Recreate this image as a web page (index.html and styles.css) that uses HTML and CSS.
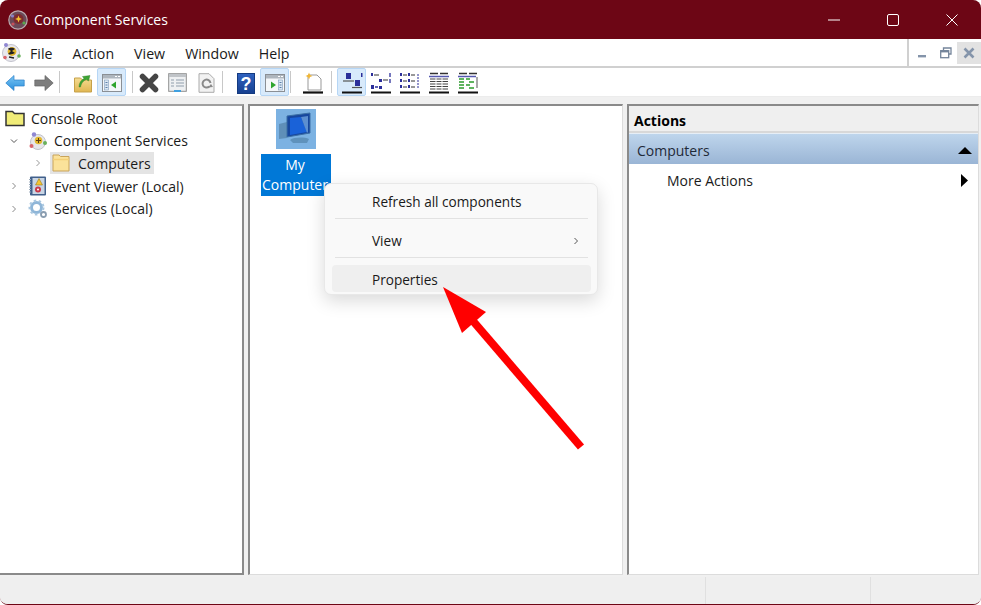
FILE: index.html
```html
<!DOCTYPE html>
<html lang="en">
<head>
<meta charset="utf-8">
<title>Component Services</title>
<link rel="stylesheet" href="styles.css">
</head>
<body>
<div class="window">
  <header class="titlebar">
    <div class="title-left">
      <svg class="app-icon" viewBox="0 0 20 20"><circle cx="10" cy="10" r="9.200" fill="#6b4a58" stroke="#b9a9ae" stroke-width="1.200"/><circle cx="10.500" cy="9" r="5" fill="#7d2a2e"/><path d="M10.500 5.600l1 2.400 2.400 1-2.400 1-1 2.400-1-2.400-2.400-1 2.400-1z" fill="#f3c431"/><circle cx="4.500" cy="6" r="1.600" fill="#8a7fc8"/><circle cx="5" cy="14" r="1.600" fill="#c8505a"/><circle cx="16" cy="13" r="1.600" fill="#5aa84c"/></svg>
      <span class="title-text">Component Services</span>
    </div>
    <div class="caption">
      <span class="cap-btn"><svg viewBox="0 0 12 12" width="12" height="12"><path d="M0 6h12" stroke="#fff" stroke-width="1"/></svg></span>
      <span class="cap-btn"><svg viewBox="0 0 12 12" width="12" height="12"><rect x=".5" y=".5" width="11" height="11" rx="1.500" fill="none" stroke="#fff"/></svg></span>
      <span class="cap-btn"><svg viewBox="0 0 12 12" width="12" height="12"><path d="M.5.5l11 11M11.500.5l-11 11" stroke="#fff" stroke-width="1"/></svg></span>
    </div>
  </header>

  <div class="menubar">
    <nav class="menus">
      <svg class="mmc-icon" viewBox="0 0 20 20"><circle cx="10" cy="11" r="8.500" fill="#e8e8ee" stroke="#c2c2cc"/><circle cx="11" cy="9.500" r="4.400" fill="#e2b52c"/><path d="M7 7c2-2 6-1 7 0l-3 2 3 2c-2 1-5 2-7 1l3-3z" fill="#222"/><path d="M8 15l5 1" stroke="#222" stroke-width="1.500"/><circle cx="5" cy="3" r="2" fill="#8f87d2"/><circle cx="4" cy="15.500" r="1.800" fill="#d8646c"/><circle cx="18" cy="14" r="1.800" fill="#69b05c"/></svg>
      <span class="menu-item">File</span>
      <span class="menu-item">Action</span>
      <span class="menu-item">View</span>
      <span class="menu-item">Window</span>
      <span class="menu-item">Help</span>
    </nav>
    <div class="mdi">
      <span class="mdi-btn"><svg viewBox="0 0 12 12" width="12" height="12"><rect x="1" y="8" width="8" height="2.400" fill="#8494aa"/></svg></span>
      <span class="mdi-btn"><svg viewBox="0 0 12 12" width="12" height="12"><path d="M3.500 3V1h7.500v6H9" fill="none" stroke="#75859b" stroke-width="1.300"/><rect x=".7" y="3.700" width="8" height="7" fill="#fff" stroke="#75859b" stroke-width="1.300"/><rect x=".7" y="3.400" width="8" height="2" fill="#75859b"/></svg></span>
      <span class="mdi-btn mdi-close"><svg viewBox="0 0 12 12" width="12" height="12"><path d="M1.500 1.500l9 9M10.500 1.500l-9 9" stroke="#8494aa" stroke-width="2.600"/></svg></span>
    </div>
  </div>

  <div class="toolbar">
    <span class="tb"><svg viewBox="0 0 20 18" width="20" height="18"><defs><linearGradient id="blueArrow" x1="0" y1="0" x2="0" y2="1"><stop offset="0" stop-color="#7cc6f4"/><stop offset="1" stop-color="#2a8fdc"/></linearGradient><linearGradient id="helpBlue" x1="0" y1="0" x2="0" y2="1"><stop offset="0" stop-color="#2f62c0"/><stop offset="1" stop-color="#17408f"/></linearGradient><linearGradient id="folderUp" x1="0" y1="0" x2="0" y2="1"><stop offset="0" stop-color="#f5dc92"/><stop offset="1" stop-color="#e0b651"/></linearGradient></defs><path d="M.8 9l8.200-7.500V6h10.200v6H9v4.500z" fill="url(#blueArrow)" stroke="#2a7fc8" stroke-width=".7"/></svg></span>
    <span class="tb"><svg viewBox="0 0 20 18" width="20" height="18"><path d="M19.200 9L11 1.500V6H.8v6H11v4.500z" fill="#7d7d7d" stroke="#666" stroke-width=".7"/></svg></span>
    <span class="sep sep-a"></span>
    <span class="tb"><svg viewBox="0 0 20 20" width="20" height="20"><path d="M1.500 5h6l2 2h9v12h-17z" fill="url(#folderUp)" stroke="#c6a14a"/><path d="M6 14c0-4 2-7 5-8.500L9.500 3.500 17 2.500l-1.500 5.500-2-1.500c-3 1-5 3-6 7.500z" fill="#3fa535" stroke="#2a7a22" stroke-width=".4"/></svg></span>
    <span class="tb active"><svg viewBox="0 0 20 18" width="20" height="18"><rect x=".5" y=".5" width="19" height="17" fill="#f4f7fa" stroke="#8a8f95"/><rect x="1" y="1" width="18" height="3.500" fill="#aeb6be"/><path d="M13 2.500h2M16 2.500h2" stroke="#fff"/><rect x="2.500" y="6" width="4" height="10" fill="#dbe8f4" stroke="#7d9cbd" stroke-width=".6"/><path d="M3.500 8.500h2M3.500 11h2M3.500 13.500h2" stroke="#5c7fa8"/><path d="M14 7.500v7l-5-3.500z" fill="#2ea52e"/></svg></span>
    <span class="sep sep-b"></span>
    <span class="tb"><svg viewBox="0 0 20 20" width="20" height="20"><path d="M3.500 3.500l13 13M16.500 3.500l-13 13" stroke="#454545" stroke-width="5.500" stroke-linecap="round"/></svg></span>
    <span class="tb"><svg viewBox="0 0 19 20" width="19" height="20"><rect x=".7" y=".7" width="17.600" height="17.600" fill="#eef0f2" stroke="#8f8f8f"/><rect x="1" y="1" width="17" height="3" fill="#c0c4c8"/><path d="M3 7h3M8 7h8M3 10h3M8 10h8M3 13h3M8 13h8" stroke="#8f9dab" stroke-width="1.200"/><rect x="6" y="17" width="7" height="2" fill="#3fa0e0"/></svg></span>
    <span class="tb"><svg viewBox="0 0 17 20" width="17" height="20"><path d="M1 .7h10l5 5v13.600H1z" fill="#f2f2f2" stroke="#aaa"/><path d="M12.500 10a4 4 0 1 0-1.200 3.500" fill="none" stroke="#8a8a8a" stroke-width="2"/><path d="M10 14.500l5-.5-2-3z" fill="#8a8a8a"/></svg></span>
    <span class="sep sep-a"></span>
    <span class="tb"><svg viewBox="0 0 18 21" width="18" height="21"><rect x=".5" y=".5" width="17" height="20" fill="url(#helpBlue)" stroke="#143a80"/><text x="9" y="17" class="help-mark">?</text></svg></span>
    <span class="tb active"><svg viewBox="0 0 20 18" width="20" height="18"><rect x=".5" y=".5" width="19" height="17" fill="#f4f7fa" stroke="#8a8f95"/><rect x="1" y="1" width="18" height="3.500" fill="#aeb6be"/><path d="M13 2.500h2M16 2.500h2" stroke="#fff"/><rect x="13.500" y="6" width="4" height="10" fill="#dbe8f4" stroke="#7d9cbd" stroke-width=".6"/><path d="M14.500 8.500h2M14.500 11h2M14.500 13.500h2" stroke="#5c7fa8"/><path d="M6 7.500v7l5-3.500z" fill="#2ea52e"/></svg></span>
    <span class="sep sep-c"></span>
    <span class="tb"><svg viewBox="0 0 20 22" width="20" height="22"><path d="M5 3h9l4 4v11H5z" fill="#fff" stroke="#999"/><path d="M0 20.500h20" stroke="#111" stroke-width="2.200"/><path d="M6 .5l1 2.500 2.500 1L7 5l-1 2.500L5 5 2.500 4 5 3z" fill="#f2b632"/></svg></span>
    <span class="sep sep-d"></span>
    <span class="tb active"><svg viewBox="0 0 22 22" width="22" height="22"><rect x="5" y="1" width="5" height="6" fill="#2b2f9a"/><path d="M2 9h11" stroke="#555" stroke-width="1.200"/><rect x="14" y="8" width="5" height="6" fill="#2b2f9a"/><path d="M11 15.500h10" stroke="#555" stroke-width="1.200"/><rect x="20" y="1" width="1.500" height="4" fill="#2b2f9a"/><path d="M1 20.500h20" stroke="#111" stroke-width="2"/></svg></span>
    <span class="tb"><svg viewBox="0 0 22 22" width="22" height="22"><path d="M1 1h2v3H1zM9 14h3v3H9zM9 7h3v3H9z" fill="#2b2f9a"/><path d="M4 3h5M13 8h5M2 15h2" stroke="#333"/><rect x="1" y="13" width="3" height="4" fill="#2b2f9a"/><path d="M20 1v4M20 7v4M5 15h3" stroke="#2b2f9a" stroke-width="1.300"/><path d="M1 20.500h20" stroke="#111" stroke-width="2"/></svg></span>
    <span class="tb"><svg viewBox="0 0 22 22" width="22" height="22"><g fill="#2b2f9a"><rect x="1" y="1" width="2" height="3"/><rect x="9" y="1" width="2" height="3"/><rect x="1" y="7" width="2" height="3"/><rect x="9" y="7" width="2" height="3"/><rect x="1" y="13" width="2" height="3"/><rect x="9" y="13" width="2" height="3"/></g><path d="M4 3h4M12 3h4M4 9h4M12 9h4M4 15h4M12 15h4" stroke="#333"/><path d="M19 2v14" stroke="#2b2f9a" stroke-dasharray="2 1"/><path d="M1 20.500h20" stroke="#111" stroke-width="2"/></svg></span>
    <span class="tb"><svg viewBox="0 0 22 22" width="22" height="22"><path d="M2 1.500h8M12 1.500h8" stroke="#333" stroke-width="1.500"/><path d="M1 4.500h20" stroke="#5558b0" stroke-width="1.500"/><path d="M2 7h18M2 9.500h18M2 12h18M2 14.500h18M2 17h18" stroke="#444" stroke-width="1.200"/><path d="M8 6v12M14 6v12" stroke="#fff"/><path d="M1 20.500h20" stroke="#111" stroke-width="2"/></svg></span>
    <span class="tb"><svg viewBox="0 0 22 22" width="22" height="22"><path d="M2 1.500h8M12 1.500h8" stroke="#333" stroke-width="1.500"/><path d="M1 4.500h18" stroke="#5558b0" stroke-width="1.500"/><path d="M2 7h5M9 7h4M2 10h5M12 10h5M2 13h5M9 13h4M2 16h5M12 16h5" stroke="#2c9c2c" stroke-width="1.500"/><rect x="19" y="5" width="2" height="11" fill="#aaa"/><path d="M1 20.500h20" stroke="#111" stroke-width="2"/></svg></span>
  </div>

  <main class="panes">
    <aside class="pane tree">
      <div class="row root">
        <svg class="tree-icon" viewBox="0 0 20 18"><path d="M1 2.500h6.500l2 2H19v12H1z" fill="#f0ec78" stroke="#333" stroke-width="1.500"/></svg>
        <span>Console Root</span>
      </div>
      <div class="row depth1">
        <svg class="chev" viewBox="0 0 12 12"><path d="M3 4.500l3 3 3-3" fill="none" stroke="#555" stroke-width="1"/></svg>
        <svg class="tree-icon" viewBox="0 0 20 20"><circle cx="10" cy="11" r="7.500" fill="#e6e6ea" stroke="#c0c0c8"/><circle cx="10.500" cy="9.500" r="3.800" fill="#e3b82e"/><path d="M10.500 7v5M8 9.500h5" stroke="#5a3d10"/><circle cx="6" cy="3.500" r="2.200" fill="#8f87d2"/><circle cx="3.500" cy="15" r="2" fill="#d8646c"/><circle cx="17" cy="12" r="2" fill="#69b05c"/></svg>
        <span>Component Services</span>
      </div>
      <div class="row depth2">
        <svg class="chev" viewBox="0 0 12 12"><path d="M4.500 3l3 3-3 3" fill="none" stroke="#9a9a9a" stroke-width="1"/></svg>
        <span class="selected">
          <svg class="tree-icon" viewBox="0 0 20 18"><path d="M2 1h6l1.500 1.500H18V17H2z" fill="#fbe29a" stroke="#c9a45a"/><path d="M2 5.500h16" stroke="#f3cf76" stroke-width="1.500"/></svg>
          <span>Computers</span>
        </span>
      </div>
      <div class="row depth1">
        <svg class="chev" viewBox="0 0 12 12"><path d="M4.500 3l3 3-3 3" fill="none" stroke="#8a8a8a" stroke-width="1"/></svg>
        <svg class="tree-icon" viewBox="0 0 20 20"><rect x="2" y=".5" width="16" height="19" rx="1" fill="#41608c"/><rect x="4.500" y="2" width="12" height="16" fill="#c9d5e4"/><path d="M2 3v14" stroke="#9ab" stroke-dasharray="1 1.500" stroke-width="2"/><path d="M11 2.500l3.500 6.500h-7z" fill="#f4c430" stroke="#8a6d10" stroke-width=".5"/><circle cx="10" cy="13.500" r="3" fill="#c8394a"/><circle cx="10" cy="13.500" r="1" fill="#fff"/></svg>
        <span>Event Viewer (Local)</span>
      </div>
      <div class="row depth1">
        <svg class="chev" viewBox="0 0 12 12"><path d="M4.500 3l3 3-3 3" fill="none" stroke="#8a8a8a" stroke-width="1"/></svg>
        <svg class="tree-icon" viewBox="0 0 20 20"><circle cx="8.500" cy="8.500" r="5" fill="none" stroke="#8fb6d8" stroke-width="3"/><circle cx="8.500" cy="8.500" r="7" fill="none" stroke="#a9c7e0" stroke-width="2" stroke-dasharray="2.500 2.500"/><circle cx="15.500" cy="15.500" r="2.500" fill="none" stroke="#8a9db0" stroke-width="1.800"/></svg>
        <span>Services (Local)</span>
      </div>
    </aside>

    <section class="pane center">
      <div class="computer">
        <div class="computer-icon">
          <svg viewBox="0 0 40 40" width="40" height="40"><path d="M3 15l8-2v16l-8 1z" fill="#5f8fb8"/><path d="M11 7l23-3v20l-23 4z" fill="#17479e" stroke="#3a6ea5"/><path d="M14 9l11-1 6 15-17 3z" fill="#1a62d8"/><path d="M25 8l7-1v16l-1 1z" fill="#5c8fd0"/><path d="M14 31c4-3 14-3 19-1l-2 4H17z" fill="#5f92bc"/></svg>
        </div>
        <div class="computer-label">My Computer</div>
      </div>
    </section>

    <aside class="pane actions">
      <h2 class="actions-title">Actions</h2>
      <div class="actions-group">
        <span>Computers</span>
        <svg viewBox="0 0 14 7" width="14" height="7"><path d="M7 0l7 7H0z" fill="#000"/></svg>
      </div>
      <div class="actions-item">
        <span>More Actions</span>
        <svg viewBox="0 0 7 13" width="7" height="13"><path d="M0 0l7 6.500L0 13z" fill="#000"/></svg>
      </div>
    </aside>
  </main>

  <footer class="statusbar">
    <span class="status-cell wide"></span>
    <span class="status-cell mid"></span>
    <span class="status-cell end"></span>
  </footer>

  <div class="context-menu">
    <div class="ctx-item">Refresh all components</div>
    <div class="ctx-sep"></div>
    <div class="ctx-item">View<svg class="ctx-chev" viewBox="0 0 6 8" width="6" height="8"><path d="M1.500 1l3 3-3 3" fill="none" stroke="#555" stroke-width="1"/></svg></div>
    <div class="ctx-sep ctx-sep-last"></div>
    <div class="ctx-item hover">Properties</div>
  </div>

  <svg class="arrow" viewBox="0 0 981 605" width="981" height="605"><path d="M581 447L473 321" stroke="#ff0000" stroke-width="8" fill="none"/><path d="M443 287l43 25-24 21z" fill="#ff0000"/></svg>
</div>
</body>
</html>
```

FILE: styles.css
```css
* { box-sizing: border-box; }
html, body { margin: 0; padding: 0; background: #fff; }
body { width: 981px; height: 605px; overflow: hidden; font-family: "Open Sans", "Noto Sans", sans-serif; font-size: 14px; color: #1a1a1a; }
svg { display: block; flex: none; }

.window { position: relative; width: 981px; height: 605px; display: flex; flex-direction: column; overflow: hidden; border-radius: 8px; background: #f0f0f0; border-bottom: 1px solid #6d0615; }

.titlebar { height: 39px; background: #6d0615; color: #fff; display: flex; justify-content: space-between; align-items: center; }
.title-left { display: flex; align-items: center; padding-left: 8px; }
.app-icon { width: 20px; height: 20px; }
.title-text { margin-left: 6px; font-size: 14px; }
.caption { display: flex; }
.cap-btn { width: 59px; height: 39px; display: flex; align-items: center; justify-content: center; }

.menubar { height: 29px; background: #fff; border-bottom: 2px solid #d0d0d0; display: flex; justify-content: space-between; }
.menus { display: flex; align-items: center; flex: 1; border-right: 2px solid #d0d0d0; margin-right: 1px; padding: 2px 0 0 1px; font-size: 14.2px; }
.mmc-icon { width: 20px; height: 20px; margin-right: 9px; margin-top: -3px; }
.menu-item { margin-right: 20px; }
.mdi { display: flex; padding: 3px 0 0 2px; width: 71px; }
.mdi-btn { width: 22px; height: 22px; margin-right: 1px; display: flex; align-items: center; justify-content: center; }
.mdi-close { background: #e2e2e2; width: 24px; margin-right: 0; }

.toolbar { height: 29px; background: #fff; display: flex; align-items: stretch; border-bottom: 1px solid #ececec; }
.tb { width: 29px; display: flex; align-items: center; justify-content: center; padding-top: 2px; border: 1px solid transparent; border-radius: 2px; }
.tb.active { background: #d8eafb; border-color: #b6d6f5; }
.sep { width: 1px; background: #c8c8c8; margin-top: 3px; margin-bottom: 3px; }
.sep-a { margin-left: 1px; margin-right: 8px; }
.sep-b { margin-left: 6px; margin-right: 1px; }
.sep-c { margin-left: 1px; margin-right: 7px; }
.sep-d { margin-left: 4px; margin-right: 5px; }
.help-mark { font-family: "Liberation Sans", sans-serif; font-size: 18px; font-weight: 700; fill: #fff; text-anchor: middle; }

.panes { flex: 1; min-height: 0; display: grid; grid-template-columns: 244px 375px 352px; column-gap: 4px; padding: 7px 2px 2px 0; }
.pane { background: #fff; border-style: solid; border-width: 2px 1px 1px 2px; border-color: #8a8a8a #dcdcdc #dcdcdc #8a8a8a; overflow: hidden; min-width: 0; }

.tree { border-left: 0; border-right: 2px solid #8a8a8a; border-bottom: 2px solid #8a8a8a; border-top-color: #a0a0a0; padding-top: 1px; }
.row { height: 22.6px; display: flex; align-items: center; white-space: nowrap; }
.root { padding-left: 5px; gap: 6px; }
.depth1 { padding-left: 8px; gap: 8px; }
.depth1 .tree-icon { margin-right: -2px; }
.depth2 { padding-left: 32px; gap: 6px; }
.chev { width: 12px; height: 12px; }
.tree-icon { width: 20px; height: 20px; }
.selected { display: flex; align-items: center; gap: 7px; height: 22px; width: 104px; padding-left: 1px; background: #e4e4e4; }

.center { padding: 3px 0 0 11px; position: relative; }
.computer { width: 70px; display: flex; flex-direction: column; align-items: center; gap: 5px; }
.computer-icon { width: 40px; height: 40px; background: #7cb2e2; }
.computer-label { width: 70px; height: 42px; background: #0078d7; color: #fff; text-align: center; line-height: 20px; padding: 1px 2px 0 0; }

.actions-title { margin: 0; height: 27px; background: #efefef; border-bottom: 2px solid #d8d8d8; font-size: 14px; font-weight: 700; line-height: 30px; padding-left: 5px; color: #000; }
.actions-group { height: 31px; display: flex; justify-content: space-between; align-items: center; padding: 2px 6px 0 8px; background: linear-gradient(#bed5ec, #9ab5d5); color: #1f2a38; border-top: 1px solid #e6eef6; }
.actions-item { height: 32px; display: flex; justify-content: space-between; align-items: center; padding: 0 10px 0 38px; }

.statusbar { height: 27px; background: #efefef; display: grid; grid-template-columns: 706px 165px 1fr; }
.status-cell { border-right: 1px solid #e0e0e0; }
.status-cell.end { border-right: 0; }

.context-menu { position: absolute; left: 324px; top: 183px; width: 274px; height: 112px; background: #f9f9f9; border: 1px solid #e8e8e8; border-radius: 7px; box-shadow: 0 6px 18px rgba(0,0,0,.15); padding: 4px 6px 3px 7px; display: flex; flex-direction: column; }
.ctx-item { flex: none; height: 27px; line-height: 27px; padding: 0 12px 0 40px; display: flex; align-items: center; justify-content: space-between; border-radius: 4px; font-size: 13.6px; }
.ctx-item.hover { background: #efefef; padding-top: 2px; }
.ctx-sep { flex: none; height: 1px; background: #e2e2e2; margin: 3px 3px 8px 3px; }
.ctx-sep-last { margin-bottom: 7px; }
.arrow { position: absolute; left: 0; top: 0; pointer-events: none; }
```
